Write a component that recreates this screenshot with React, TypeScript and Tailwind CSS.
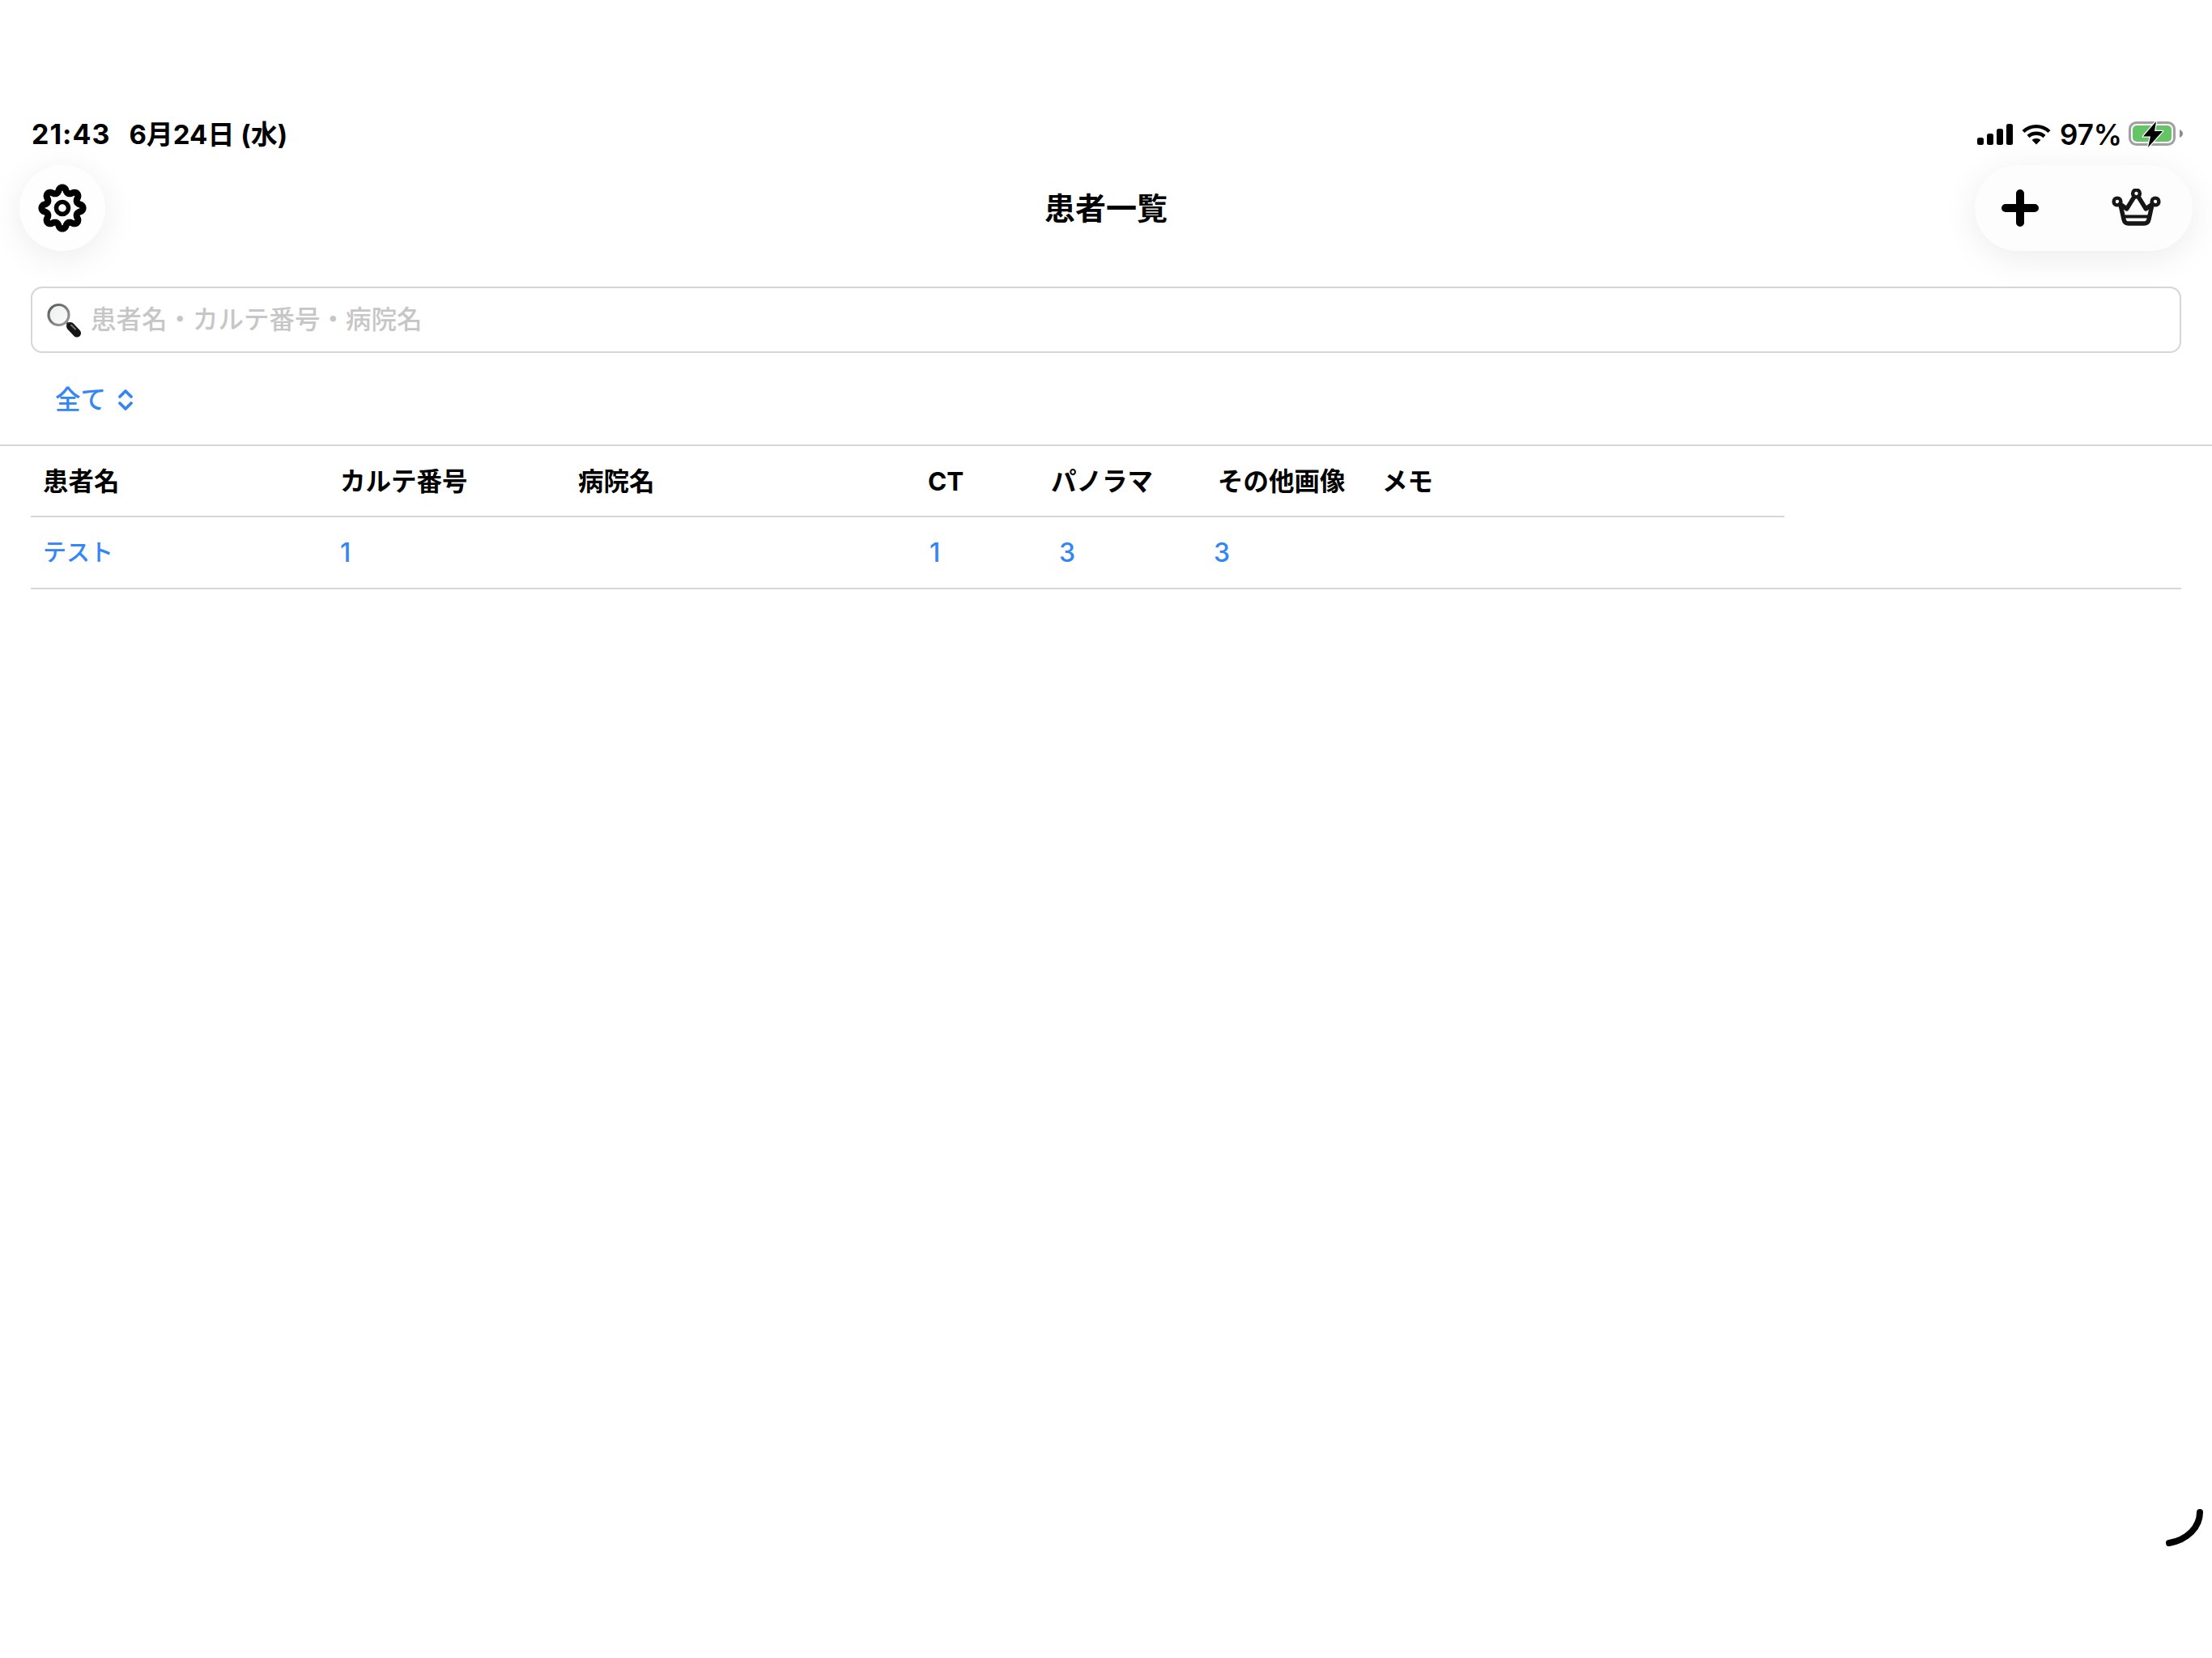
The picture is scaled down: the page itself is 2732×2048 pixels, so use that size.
import React from "react";

const gearPoints = Array.from({ length: 160 }, (_, i) => {
  const t = (i / 160) * Math.PI * 2;
  const c = Math.cos(8 * t);
  const shaped = Math.sign(c) * Math.pow(Math.abs(c), 0.7);
  const r = 22.5 + 3.1 * shaped;
  return `${(30 + r * Math.sin(t)).toFixed(2)},${(30 - r * Math.cos(t)).toFixed(2)}`;
}).join(" ");

function Gear() {
  return (
    <svg width="60" height="60" viewBox="0 0 60 60" fill="none">
      <polygon points={gearPoints} stroke="#000" strokeWidth="8" strokeLinejoin="round" />
      <circle cx="30" cy="30" r="7.5" stroke="#000" strokeWidth="5.5" />
    </svg>
  );
}

function Plus() {
  return (
    <svg width="46" height="46" viewBox="0 0 46 46">
      <path d="M5 23H41M23 5V41" stroke="#000" strokeWidth="10" strokeLinecap="round" />
    </svg>
  );
}

function Crown() {
  return (
    <svg width="62" height="48" viewBox="0 0 62 48" fill="none" stroke="#161616" strokeLinejoin="round" strokeLinecap="round">
      <circle cx="30.5" cy="6" r="4.4" strokeWidth="4.4" />
      <circle cx="7" cy="16" r="4.4" strokeWidth="4.4" />
      <circle cx="54" cy="16" r="4.4" strokeWidth="4.4" />
      <path d="M10.5 19L18.7 25L28 10M33 10L42.3 25L50.5 19" strokeWidth="5.4" />
      <path d="M11 20L15 38Q16 43 21 43H40Q45 43 46 38L50 20" strokeWidth="5.4" />
      <path d="M15 34.5H46" strokeWidth="4" />
    </svg>
  );
}

function Signal() {
  return (
    <svg width="44" height="26" viewBox="0 0 44 26" fill="#000">
      <rect x="0" y="17" width="8" height="9" rx="2.5" />
      <rect x="12" y="12" width="8" height="14" rx="2.5" />
      <rect x="24" y="6" width="8" height="20" rx="2.5" />
      <rect x="36" y="0" width="8" height="26" rx="2.5" />
    </svg>
  );
}

function Wifi() {
  return (
    <svg width="36" height="26" viewBox="0 0 36 26" fill="none" stroke="#000" strokeWidth="4.4">
      <path d="M2 9.5C11 1 25 1 34 9.5" />
      <path d="M8 15.5C13.5 10.5 22.5 10.5 28 15.5" />
      <path d="M18 25.5L12.6 20C15.6 17.4 20.4 17.4 23.4 20Z" fill="#000" stroke="none" />
    </svg>
  );
}

function Battery() {
  return (
    <svg width="68" height="34" viewBox="0 0 68 34" fill="none">
      <rect x="1.5" y="2.5" width="55" height="27" rx="8" stroke="#a0a0a0" strokeWidth="3" />
      <rect x="5" y="6" width="48" height="20" rx="5" fill="#65c466" />
      <path d="M63 11C65.5 12 67 14 67 16C67 18 65.5 20 63 21Z" fill="#8c8c8c" />
      <path d="M34 1L18 19.5H27L24 33L42 13H32Z" fill="#000" stroke="#fff" strokeWidth="2.6" strokeLinejoin="round" paintOrder="stroke" />
    </svg>
  );
}

function Magnifier() {
  return (
    <svg width="44" height="44" viewBox="0 0 44 44" fill="none">
      <defs>
        <linearGradient id="lens" x1="0" y1="0" x2="1" y2="1">
          <stop offset="0" stopColor="#eeeeee" />
          <stop offset="1" stopColor="#fafafa" />
        </linearGradient>
        <linearGradient id="ring" x1="0" y1="0" x2="1" y2="1">
          <stop offset="0" stopColor="#555a5e" />
          <stop offset="1" stopColor="#a0a0a0" />
        </linearGradient>
      </defs>
      <path d="M24 24L30 30" stroke="#555" strokeWidth="3.5" />
      <path d="M30 30L38 38.5" stroke="#151515" strokeWidth="10" strokeLinecap="round" />
      <path d="M31 28.5L36 33.5" stroke="#6f7478" strokeWidth="2" strokeLinecap="round" />
      <circle cx="15.5" cy="16" r="12.5" fill="url(#lens)" stroke="url(#ring)" strokeWidth="3.2" />
    </svg>
  );
}

function Chevrons() {
  return (
    <svg width="20" height="28" viewBox="0 0 20 28" fill="none" stroke="#3386f6" strokeWidth="3.8" strokeLinecap="round" strokeLinejoin="round">
      <path d="M3 10L10 3L17 10" />
      <path d="M3 18L10 25L17 18" />
    </svg>
  );
}

const font = "font-['Inter','Noto_Sans_CJK_JP',sans-serif]";
const headCell = "pl-[15px] pt-[2px] text-[31.5px] font-bold text-black whitespace-nowrap";
const bodyCell = "font-medium text-[#3386f6] whitespace-nowrap";
const cols = "grid grid-cols-[367px_294px_432px_152px_206px_203px_512px] items-center";

export default function App() {
  return (
    <div className={`${font} relative w-[2732px] h-[2048px] bg-white overflow-hidden`}>
      <div className="pt-[146px] pl-[39px] pr-[35px] h-[186px] flex items-start justify-between">
        <div className="h-[40px] flex items-center font-bold text-black leading-none gap-[23px]">
          <span className="text-[34px] tracking-[1px]">21:43</span>
          <span className="text-[33px]">6月24日 (水)</span>
        </div>
        <div className="h-[40px] flex items-center">
          <Signal />
          <div className="ml-[11px]"><Wifi /></div>
          <span className="ml-[11px] text-[35px] font-semibold text-black leading-none">97%</span>
          <div className="ml-[8px]"><Battery /></div>
        </div>
      </div>

      <div className="mt-[18px] px-[24px] grid grid-cols-[1fr_auto_1fr] items-center">
        <div>
          <button className="w-[106px] h-[106px] rounded-full bg-[#fefefe] shadow-[0_8px_44px_rgba(0,0,0,0.08)] flex items-center justify-center">
            <Gear />
          </button>
        </div>
        <h1 className="text-[38px] font-bold text-black leading-none">患者一覧</h1>
        <div className="flex justify-end">
          <div className="w-[269px] h-[106px] rounded-full bg-[#fdfdfd] shadow-[0_8px_44px_rgba(0,0,0,0.08)] flex items-center pl-[33px] gap-[90px]">
            <Plus />
            <Crown />
          </div>
        </div>
      </div>

      <div className="mt-[44px] mx-[38px] h-[82px] border-2 border-[#d6d6d6] rounded-[14px] flex items-center pl-[17px]">
        <Magnifier />
        <span className="ml-[11px] text-[31.5px] font-medium text-[#c6c6c6] leading-none">患者名・カルテ番号・病院名</span>
      </div>

      <div className="mt-[38px] h-[40px] pl-[68px] flex items-center gap-[14px]">
        <span className="text-[31.5px] font-medium text-[#3386f6] leading-none">全て</span>
        <Chevrons />
      </div>

      <div className="mt-[35px] border-t-2 border-[#d6d6d6]" />

      <div className="mx-[38px]">
        <div className={`${cols} h-[88px] w-[2166px] border-b-2 border-[#d6d6d6]`}>
          <div className={headCell}>患者名</div>
          <div className={headCell}>カルテ番号</div>
          <div className={headCell}>病院名</div>
          <div className={headCell}>CT</div>
          <div className={headCell}>パノラマ</div>
          <div className={headCell}>その他画像</div>
          <div className={headCell}>メモ</div>
        </div>
        <div className={`${cols} h-[89px] border-b-2 border-[#d6d6d6]`}>
          <div className={`${bodyCell} pl-[15px] text-[29px]`}>テスト</div>
          <div className={`${bodyCell} pl-[15px] text-[32px]`}>1</div>
          <div />
          <div className={`${bodyCell} pl-[17px] text-[32px]`}>1</div>
          <div className={`${bodyCell} pl-[25px] text-[32px]`}>3</div>
          <div className={`${bodyCell} pl-[10px] text-[32px]`}>3</div>
          <div />
        </div>
      </div>

      <svg className="absolute left-[2672px] top-[1860px]" width="54" height="54" viewBox="0 0 54 54" fill="none">
        <path d="M45 8C45 26 30 42 7 46" stroke="#000" strokeWidth="8" strokeLinecap="round" />
      </svg>
    </div>
  );
}
